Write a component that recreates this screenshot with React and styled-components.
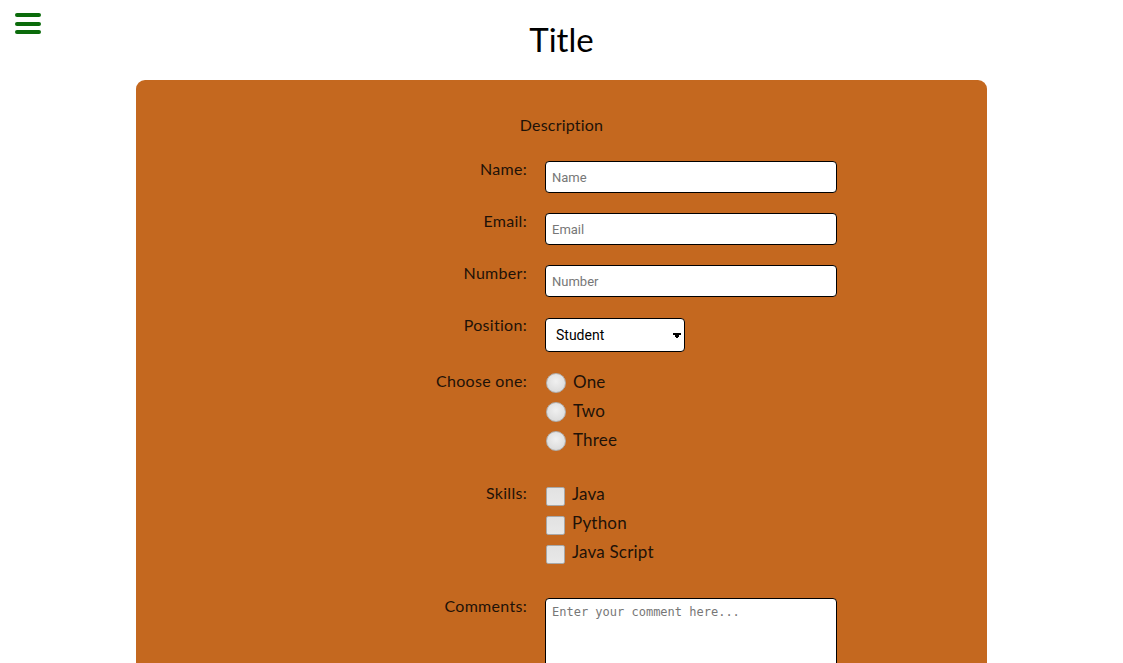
import React from "react";
import styled, { createGlobalStyle } from "styled-components";

const Global = createGlobalStyle`
  body {
    margin: 0;
    background: #ffffff;
    font-family: Lato, "Open Sans", sans-serif;
  }
`;

const Page = styled.div`
  width: 100%;
  min-height: 100vh;
  position: relative;
`;

const Menu = styled.button`
  position: absolute;
  left: 15px;
  top: 13px;
  width: 26px;
  height: 21px;
  padding: 0;
  border: none;
  background: transparent;
  display: flex;
  flex-direction: column;
  justify-content: space-between;
  cursor: pointer;
`;

const Bar = styled.span`
  display: block;
  height: 4px;
  border-radius: 2px;
  background: #0b6b0b;
`;

const Title = styled.h1`
  margin: 0;
  padding-top: 20px;
  height: 60px;
  box-sizing: border-box;
  text-align: center;
  font-size: 33px;
  font-weight: 400;
  line-height: 38px;
  color: #000;
`;

const Card = styled.div`
  width: 851px;
  margin: 0 auto;
  margin-top: 20px;
  background: #c4681f;
  border-radius: 9px;
  padding: 35px 0 40px;
  box-sizing: border-box;
`;

const Description = styled.p`
  margin: 0 0 27px;
  text-align: center;
  font-size: 16px;
  letter-spacing: 0.2px;
  color: #1e1208;
`;

const Form = styled.form`
  display: grid;
  grid-template-columns: 391px 1fr;
  column-gap: 18px;
`;

const Label = styled.label`
  text-align: right;
  font-size: 16px;
  letter-spacing: 0.3px;
  color: #1e1208;
  line-height: 20px;
  margin-top: ${(p) => (p.top === undefined ? -2 : p.top)}px;
  margin-bottom: ${(p) => (p.gap === undefined ? 22 : p.gap)}px;
`;

const Field = styled.div`
  margin-top: ${(p) => p.top || 0}px;
  margin-bottom: ${(p) => (p.gap === undefined ? 20 : p.gap)}px;
`;

const Input = styled.input`
  display: block;
  width: 292px;
  height: 32px;
  box-sizing: border-box;
  border: 1px solid #000;
  border-radius: 4px;
  padding: 0 6px;
  font-family: Roboto, "Liberation Sans", sans-serif;
  font-size: 13px;
  &::placeholder {
    color: #777;
  }
`;

const Select = styled.select`
  display: block;
  margin-top: 1px;
  width: 140px;
  height: 34px;
  border: 1px solid #000;
  border-radius: 4px;
  background: #fff;
  padding: 0 10px;
  font-family: Roboto, "Liberation Sans", sans-serif;
  font-size: 14px;
  color: #000;
  appearance: none;
  background-image: linear-gradient(45deg, transparent 50%, #000 50%),
    linear-gradient(135deg, #000 50%, transparent 50%);
  background-position: 127px 14px, 131px 14px;
  background-size: 4px 6px, 4px 6px;
  background-repeat: no-repeat;
`;

const Option = styled.label`
  display: flex;
  align-items: center;
  height: 29px;
  font-size: 17px;
  letter-spacing: 0.2px;
  color: #1e1208;
  gap: 7px;
`;

const Radio = styled.input.attrs({ type: "radio" })`
  appearance: none;
  margin: 3px 0 0 1px;
  width: 20px;
  height: 20px;
  border-radius: 50%;
  border: 1px solid #b0b0b0;
  background: radial-gradient(circle at 50% 40%, #f0f0f0, #d6d6d6);
`;

const Check = styled.input.attrs({ type: "checkbox" })`
  appearance: none;
  margin: 6px 0 0 1px;
  width: 19px;
  height: 19px;
  border-radius: 2px;
  border: 1px solid #a8a8a8;
  background: linear-gradient(#e2e2e2, #e8e8e8);
`;

const Comment = styled.textarea`
  display: block;
  width: 292px;
  height: 120px;
  box-sizing: border-box;
  border: 1px solid #000;
  border-radius: 4px;
  padding: 6px 6px;
  font-family: "DejaVu Sans Mono", "Liberation Mono", monospace;
  font-size: 12px;
  resize: none;
  &::placeholder {
    color: #777;
  }
`;

const App = () => {
  return (
    <Page>
      <Global />
      <Menu aria-label="menu">
        <Bar />
        <Bar />
        <Bar />
      </Menu>
      <Title>Title</Title>
      <Card>
        <Description>Description</Description>
        <Form>
          <Label>Name:</Label>
          <Field><Input placeholder="Name" /></Field>
          <Label>Email:</Label>
          <Field><Input placeholder="Email" /></Field>
          <Label>Number:</Label>
          <Field><Input placeholder="Number" /></Field>
          <Label>Position:</Label>
          <Field>
            <Select defaultValue="Student">
              <option>Student</option>
              <option>Teacher</option>
              <option>Other</option>
            </Select>
          </Field>
          <Label top={-1} gap={25}>Choose one:</Label>
          <Field top={-5} gap={29}>
            <Option><Radio name="choice" />One</Option>
            <Option><Radio name="choice" />Two</Option>
            <Option><Radio name="choice" />Three</Option>
          </Field>
          <Label top={0} gap={26}>Skills:</Label>
          <Field top={-4} gap={30}>
            <Option><Check />Java</Option>
            <Option><Check />Python</Option>
            <Option><Check />Java Script</Option>
          </Field>
          <Label top={0} gap={20}>Comments:</Label>
          <Field top={2}><Comment placeholder="Enter your comment here..." /></Field>
        </Form>
      </Card>
    </Page>
  );
};

export default App;
